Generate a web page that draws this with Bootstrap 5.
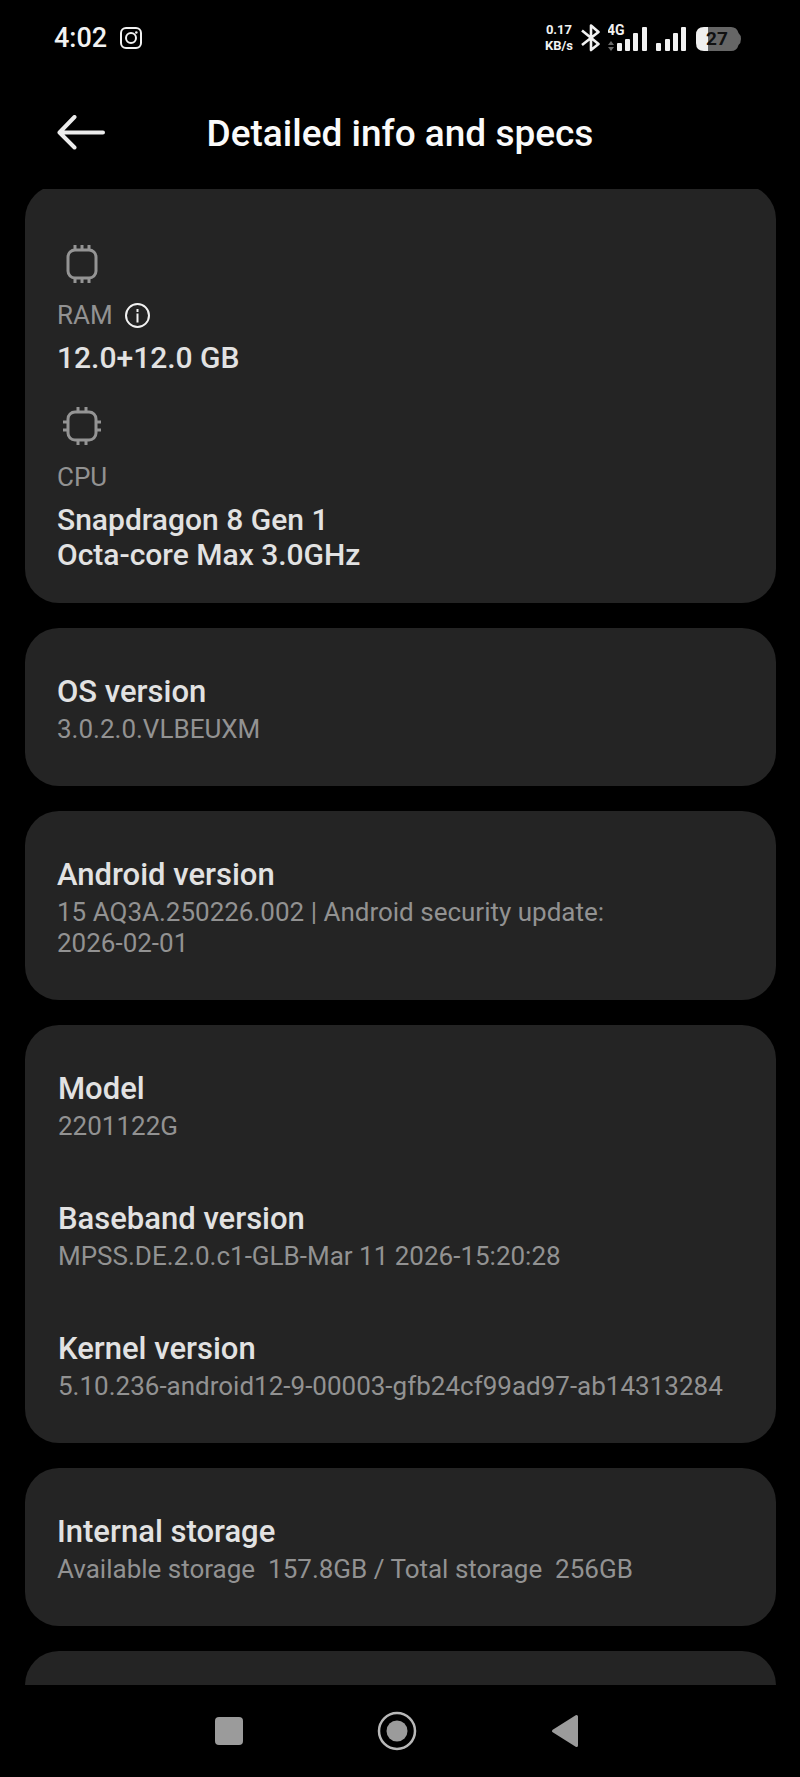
<!DOCTYPE html>
<html lang="en">
<head>
<meta charset="utf-8">
<meta name="viewport" content="width=device-width, initial-scale=1">
<title>Detailed info and specs</title>
<link href="https://cdn.jsdelivr.net/npm/bootstrap@5.3.0/dist/css/bootstrap.min.css" rel="stylesheet">
<style>
  body { background: #000; color: #e2e2e2; font-family: Roboto, "Noto Sans", sans-serif; }
  svg { display: block; flex: none; }
  .status-bar { height: 78px; padding: 0 58px 2px 54px; color: #f2f2f2; }
  .clock { font-size: 27px; line-height: 34px; font-weight: 500; margin-right: 12px; }
  .net-speed { font-size: 13px; line-height: 16px; font-weight: 700; }
  .title-bar { height: 111px; padding: 0 56px; }
  .title-bar h1 { font-size: 37px; line-height: 42px; font-weight: 500; color: #fafafa; }
  .side-slot { width: 50px; }
  .spec-list { gap: 25px; padding: 0 24px 0 25px; scrollbar-width: none; }
  .spec-list::-webkit-scrollbar { display: none; }
  .spec-card { background: #242424; color: inherit; border-radius: 34px; padding: 46px 30px 41px 32px; gap: 59px; }
  .chip-card { margin-top: -4px; padding-top: 54px; padding-bottom: 31px; gap: 26px; }
  .group-card { padding-left: 33px; }
  .next-card { min-height: 158px; }
  .spec-name { font-size: 31px; line-height: 36px; font-weight: 500; margin: 0 0 4px; }
  .spec-value, .chip-label { font-size: 26px; line-height: 31px; font-weight: 400; color: #929292; margin: 0; }
  .chip-label { margin: 11px 0 9px; }
  .chip-value { font-size: 30px; line-height: 35px; font-weight: 500; margin: 0; }
  .plain-btn { background: none; border: 0; padding: 0; color: inherit; }
  .nav-keys { height: 92px; gap: 112px; padding-right: 7px; color: #9b9b9b; }
</style>
</head>
<body>
<div class="vh-100 d-flex flex-column overflow-hidden">

  <div class="status-bar d-flex align-items-center flex-shrink-0">
    <span class="clock">4:02</span>
    <svg class="me-auto" width="24" height="24" viewBox="0 0 24 24" fill="none" stroke="currentColor" stroke-width="2" aria-label="Instagram">
      <rect x="2" y="2" width="20" height="20" rx="5"/>
      <circle cx="12" cy="12" r="5"/>
      <circle cx="17.300" cy="6.500" r="1.300" fill="currentColor" stroke="none"/>
    </svg>
    <div class="net-speed text-center">0.17<br>KB/s</div>
    <svg class="ms-2" width="19" height="30" viewBox="0 0 19 30" fill="none" stroke="currentColor" stroke-width="2.600" stroke-linejoin="round" aria-label="Bluetooth">
      <path d="M1 7.500l16.500 13.500-7.500 6V2.500l7.500 6.500L1 22"/>
    </svg>
    <svg class="ms-2" width="80" height="30" viewBox="0 0 80 30" fill="currentColor" aria-label="Signal">
      <text x="-1" y="12" font-size="14" font-weight="700">4G</text>
      <path fill="#6b6b6b" d="M0 22l3-4 3 4zM0 24h6l-3 4z"/>
      <rect x="9" y="20" width="5" height="8" rx="1"/><rect x="17" y="16" width="5" height="12" rx="1"/>
      <rect x="25" y="10" width="5" height="18" rx="1"/><rect x="34" y="4" width="5" height="24" rx="1"/>
      <rect x="48" y="20" width="5" height="8" rx="1"/><rect x="57" y="16" width="5" height="12" rx="1"/>
      <rect x="65" y="10" width="5" height="18" rx="1"/><rect x="73" y="4" width="5" height="24" rx="1"/>
    </svg>
    <svg class="ms-2" width="46" height="30" viewBox="0 0 46 30" aria-label="Battery">
      <path fill="#666" d="M12 4h23q6 0 7.500 6 2.500 2 2.500 6t-2.500 6Q41 28 35 28H12z"/>
      <path fill="#f0f0f0" d="M12 4v24H8q-8 0-8-8v-8q0-8 8-8z"/>
      <text x="10" y="22" font-size="19" font-weight="700" fill="#111">27</text>
    </svg>
  </div>

  <header class="title-bar d-flex align-items-center justify-content-between flex-shrink-0">
    <button type="button" class="plain-btn side-slot" aria-label="Back">
      <svg width="50" height="38" viewBox="0 1 50 38" fill="none" stroke="#ececec" stroke-width="4" stroke-linecap="round" stroke-linejoin="round">
        <path d="M18.500 3L3.500 18.500l15 15M3.500 18.500H47"/>
      </svg>
    </button>
    <h1 class="m-0">Detailed info and specs</h1>
    <span class="side-slot"></span>
  </header>

  <main class="spec-list d-flex flex-column flex-grow-1 overflow-auto">
    <section class="card spec-card chip-card border-0 flex-shrink-0">
      <div>
        <svg width="50" height="50" viewBox="0 0 50 50" fill="none" stroke="#949494" stroke-width="3">
          <rect x="11" y="11" width="28" height="28" rx="7"/>
          <path d="M18 6v4M25 6v4M32 6v4M18 40v4M25 40v4M32 40v4"/>
        </svg>
        <h2 class="chip-label d-flex align-items-center">RAM
          <button type="button" class="plain-btn ms-2 ps-1 text-white" aria-label="About RAM">
            <svg width="26" height="26" viewBox="0 0 26 26" fill="none" stroke="#f2f2f2" stroke-width="2">
              <circle cx="12.500" cy="12.500" r="11.500"/><path d="M12.500 10.500v9M12.500 6v3"/>
            </svg>
          </button>
        </h2>
        <p class="chip-value">12.0+12.0 GB</p>
      </div>
      <div>
        <svg width="50" height="50" viewBox="0 0 50 50" fill="none" stroke="#949494" stroke-width="3">
          <rect x="11" y="11" width="28" height="28" rx="7"/>
          <path d="M21 6v4M29 6v4M21 40v4M29 40v4M6 21h4M6 29h4M40 21h4M40 29h4"/>
        </svg>
        <h2 class="chip-label">CPU</h2>
        <p class="chip-value">Snapdragon 8 Gen 1<br>Octa-core Max 3.0GHz</p>
      </div>
    </section>

    <section class="card spec-card border-0 flex-shrink-0">
      <div><h2 class="spec-name">OS version</h2><p class="spec-value">3.0.2.0.VLBEUXM</p></div>
    </section>

    <section class="card spec-card border-0 flex-shrink-0">
      <div><h2 class="spec-name">Android version</h2><p class="spec-value">15 AQ3A.250226.002 | Android security update:<br>2026-02-01</p></div>
    </section>

    <section class="card spec-card group-card border-0 flex-shrink-0">
      <div><h2 class="spec-name">Model</h2><p class="spec-value">2201122G</p></div>
      <div><h2 class="spec-name">Baseband version</h2><p class="spec-value">MPSS.DE.2.0.c1-GLB-Mar 11 2026-15:20:28</p></div>
      <div><h2 class="spec-name">Kernel version</h2><p class="spec-value">5.10.236-android12-9-00003-gfb24cf99ad97-ab14313284</p></div>
    </section>

    <section class="card spec-card border-0 flex-shrink-0">
      <div><h2 class="spec-name">Internal storage</h2><p class="spec-value">Available storage&nbsp; 157.8GB / Total storage&nbsp; 256GB</p></div>
    </section>

    <section class="card spec-card next-card border-0 flex-shrink-0"></section>
  </main>

  <nav class="nav-keys d-flex align-items-center justify-content-center flex-shrink-0" aria-label="System">
    <button type="button" class="plain-btn" aria-label="Recent apps">
      <svg width="56" height="40" viewBox="0 0 56 40" fill="currentColor"><rect x="14" y="6" width="28" height="28" rx="4"/></svg>
    </button>
    <button type="button" class="plain-btn" aria-label="Home">
      <svg width="56" height="40" viewBox="0 0 56 40" fill="currentColor"><circle cx="28" cy="20" r="10.500"/><circle cx="28" cy="20" r="18" fill="none" stroke="#b8b8b8" stroke-width="2.500"/></svg>
    </button>
    <button type="button" class="plain-btn" aria-label="Back one screen">
      <svg width="56" height="40" viewBox="0 0 56 40" fill="currentColor" stroke="currentColor" stroke-width="3" stroke-linejoin="round"><path d="M39.500 5.500v29L16.500 20z"/></svg>
    </button>
  </nav>
</div>
<script src="https://cdn.jsdelivr.net/npm/bootstrap@5.3.0/dist/js/bootstrap.bundle.min.js"></script>
</body>
</html>
